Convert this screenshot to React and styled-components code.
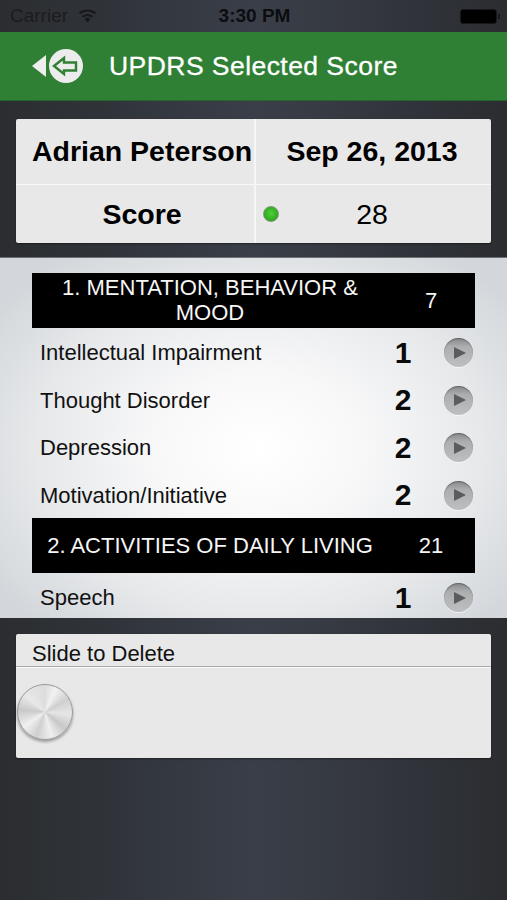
import React from 'react'
import styled, { createGlobalStyle } from 'styled-components'

const GlobalStyle = createGlobalStyle`
  html, body {
    margin: 0;
    padding: 0;
    background: #2d3138;
  }
  * {
    box-sizing: border-box;
  }
`

const Screen = styled.div`
  width: 507px;
  height: 900px;
  overflow: hidden;
  font-family: 'Liberation Sans', Arial, sans-serif;
  color: #000;
  background: linear-gradient(90deg, #2b2d30 0%, #30343a 22%, #3a3e48 50%, #373b43 62%, #2f3238 85%, #2b2d30 100%);
`

const StatusBar = styled.div`
  height: 32px;
  display: grid;
  grid-template-columns: 1fr auto 1fr;
  align-items: center;
  padding: 0 7px 0 10px;
  font-size: 19px;
  color: #0c0d10;
`

const Carrier = styled.div`
  display: flex;
  align-items: center;
  gap: 10px;
  color: #1b1c20;
`

const Clock = styled.div`
  font-weight: bold;
  font-size: 19px;
  margin-left: -1px;
`

const Battery = styled.div`
  justify-self: end;
  position: relative;
  width: 37px;
  height: 15px;
  background: #000;
  border: 1px solid #17181c;
  border-radius: 3px;
  margin-right: 3px;

  &::after {
    content: '';
    position: absolute;
    right: -4px;
    top: 4px;
    width: 2px;
    height: 5px;
    background: #17181c;
  }
`

const NavBar = styled.div`
  height: 69px;
  background: #2f7f34;
  border-bottom: 1px solid #26662b;
  display: flex;
  align-items: center;
  padding: 0 0 0 31px;
`

const NavTitle = styled.h1`
  margin: 0 0 0 25px;
  font-size: 26.5px;
  font-weight: normal;
  letter-spacing: 0.45px;
  color: #fff;
  -webkit-text-stroke: 0.3px #fff;
`

const Content = styled.div`
  padding-top: 18px;
`

const Card = styled.div`
  margin: 0 16px;
  background: #e8e8e8;
  border-radius: 2px;
  box-shadow: 0 1px 2px rgba(0, 0, 0, 0.4);
`

const InfoGrid = styled(Card)`
  height: 124px;
  display: grid;
  grid-template-columns: 240px 1fr;
  grid-template-rows: 66px 1fr;
`

const InfoCell = styled.div`
  position: relative;
  display: flex;
  align-items: center;
  justify-content: center;
  font-size: 28.5px;
  font-weight: ${(p) => (p.$plain ? 'normal' : 'bold')};
  white-space: nowrap;
  border-right: ${(p) => (p.$right ? 'none' : '2px solid #f6f6f6')};
  border-bottom: ${(p) => (p.$bottom ? 'none' : '1px solid #f8f8f8')};
  padding: ${(p) => (p.$right ? '0 3px 0 0' : '0 0 0 14px')};
`

const Led = styled.span`
  position: absolute;
  left: 7px;
  top: 50%;
  margin-top: -8px;
  width: 16px;
  height: 16px;
  border-radius: 50%;
  border: 1px solid #7d9a72;
  background: radial-gradient(circle at 50% 45%, #4fd035 0%, #2fa822 70%, #2a8a20 100%);
`

const ScorePanel = styled.div`
  margin-top: 14px;
  height: 361px;
  overflow: hidden;
  padding: 15px 32px 0;
  border-top: 1px solid #6d7177;
  background: radial-gradient(ellipse 320px 240px at 51% 53%, #ffffff 0%, #f8f8f9 32%, #e6e8ea 70%, #d3d7db 100%);
`

const SectionHeader = styled.div`
  height: 55px;
  background: #000;
  color: #f6f6f6;
  display: grid;
  grid-template-columns: 1fr 87px;
  align-items: center;
  font-size: 22px;
  text-align: center;
`

const SectionTitle = styled.div`
  line-height: 25px;
  padding-bottom: 1px;
`

const SectionTotal = styled.div`
  padding-right: 1px;
`

const ItemRow = styled.div`
  height: 47.5px;
  display: grid;
  grid-template-columns: 337px 52px 1fr;
  align-items: center;
  padding: 2px 0 0 8px;
  margin-right: -16px;
  font-size: 22px;
  color: #111;
`

const ItemName = styled.div`
  padding-top: 1px;
`

const ItemScore = styled.div`
  font-size: 30px;
  font-weight: bold;
  text-align: center;
  color: #0a0a0a;
`

const PlayButton = styled.div`
  justify-self: end;
  margin-right: 18px;
  width: 29px;
  height: 29px;
  border-radius: 50%;
  display: flex;
  align-items: center;
  justify-content: center;
  padding-left: 3px;
  background: linear-gradient(180deg, #85878a 0%, #acaeb0 30%, #bdbfc1 100%);
  box-shadow: inset 0 1px 1px rgba(0, 0, 0, 0.3), 0 1px 0 rgba(255, 255, 255, 0.6);
`

const PlayGlyph = styled.span`
  width: 0;
  height: 0;
  border-style: solid;
  border-width: 6.5px 0 6.5px 12px;
  border-color: transparent transparent transparent #5a5c5f;
`

const DeleteCard = styled(Card)`
  margin-top: 16px;
  height: 124px;
  display: flex;
  flex-direction: column;
`

const DeleteTitle = styled.div`
  height: 33px;
  padding: 7px 0 0 16px;
  font-size: 22px;
  line-height: 26px;
  color: #111;
  border-bottom: 1px solid #a9a9a9;
  box-shadow: 0 1px 0 #fafafa;
`

const SliderTrack = styled.div`
  flex: 1;
  padding: 17px 0 0 1px;
`

const Knob = styled.div`
  width: 56px;
  height: 56px;
  border-radius: 50%;
  border: 1px solid #9a9a9a;
  box-shadow: 0 2px 3px rgba(0, 0, 0, 0.35);
  background: conic-gradient(
    #dcdcdc 0deg, #f2f2f2 25deg, #cfcfcf 60deg, #e6e6e6 95deg, #c8c8c8 130deg,
    #efefef 165deg, #d0d0d0 200deg, #f0f0f0 235deg, #c9c9c9 275deg, #e8e8e8 310deg, #dcdcdc 360deg
  );
`

const WifiIcon = () => (
  <svg width="19" height="14" viewBox="0 0 19 14">
    <path d="M9.5 13.5 L6.6 10 A4.5 4.5 0 0 1 12.4 10 Z" fill="#17181c" />
    <path d="M4.6 7.8 A7.5 7.5 0 0 1 14.4 7.8" fill="none" stroke="#17181c" strokeWidth="2" />
    <path d="M1.5 4.6 A12 12 0 0 1 17.5 4.6" fill="none" stroke="#17181c" strokeWidth="2" />
  </svg>
)

const BackIcon = () => (
  <svg width="53" height="36" viewBox="0 0 53 36">
    <path d="M1 18 L15 7 V29 Z" fill="#eeeeee" />
    <circle cx="35" cy="18" r="17" fill="#ececec" />
    <path d="M23 18 L33 10 V14.5 H45 V22.5 H33 V26 Z" fill="#ececec" stroke="#2f7f34" strokeWidth="2.4" />
  </svg>
)

const rowsOne = [
  { name: 'Intellectual Impairment', score: 1 },
  { name: 'Thought Disorder', score: 2 },
  { name: 'Depression', score: 2 },
  { name: 'Motivation/Initiative', score: 2 },
]

const rowsTwo = [{ name: 'Speech', score: 1 }]

const Item = ({ item }) => (
  <ItemRow>
    <ItemName>{item.name}</ItemName>
    <ItemScore>{item.score}</ItemScore>
    <PlayButton>
      <PlayGlyph />
    </PlayButton>
  </ItemRow>
)

const App = () => {
  return (
    <Screen>
      <GlobalStyle />
      <StatusBar>
        <Carrier>
          Carrier
          <WifiIcon />
        </Carrier>
        <Clock>3:30 PM</Clock>
        <Battery />
      </StatusBar>
      <NavBar>
        <BackIcon />
        <NavTitle>UPDRS Selected Score</NavTitle>
      </NavBar>
      <Content>
        <InfoGrid>
          <InfoCell>Adrian Peterson</InfoCell>
          <InfoCell $right>Sep 26, 2013</InfoCell>
          <InfoCell $bottom>Score</InfoCell>
          <InfoCell $right $bottom $plain>
            <Led />
            28
          </InfoCell>
        </InfoGrid>
        <ScorePanel>
          <SectionHeader>
            <SectionTitle>1. MENTATION, BEHAVIOR &amp; MOOD</SectionTitle>
            <SectionTotal>7</SectionTotal>
          </SectionHeader>
          {rowsOne.map((item) => (
            <Item key={item.name} item={item} />
          ))}
          <SectionHeader>
            <SectionTitle>2. ACTIVITIES OF DAILY LIVING</SectionTitle>
            <SectionTotal>21</SectionTotal>
          </SectionHeader>
          {rowsTwo.map((item) => (
            <Item key={item.name} item={item} />
          ))}
        </ScorePanel>
        <DeleteCard>
          <DeleteTitle>Slide to Delete</DeleteTitle>
          <SliderTrack>
            <Knob />
          </SliderTrack>
        </DeleteCard>
      </Content>
    </Screen>
  )
}

export default App
